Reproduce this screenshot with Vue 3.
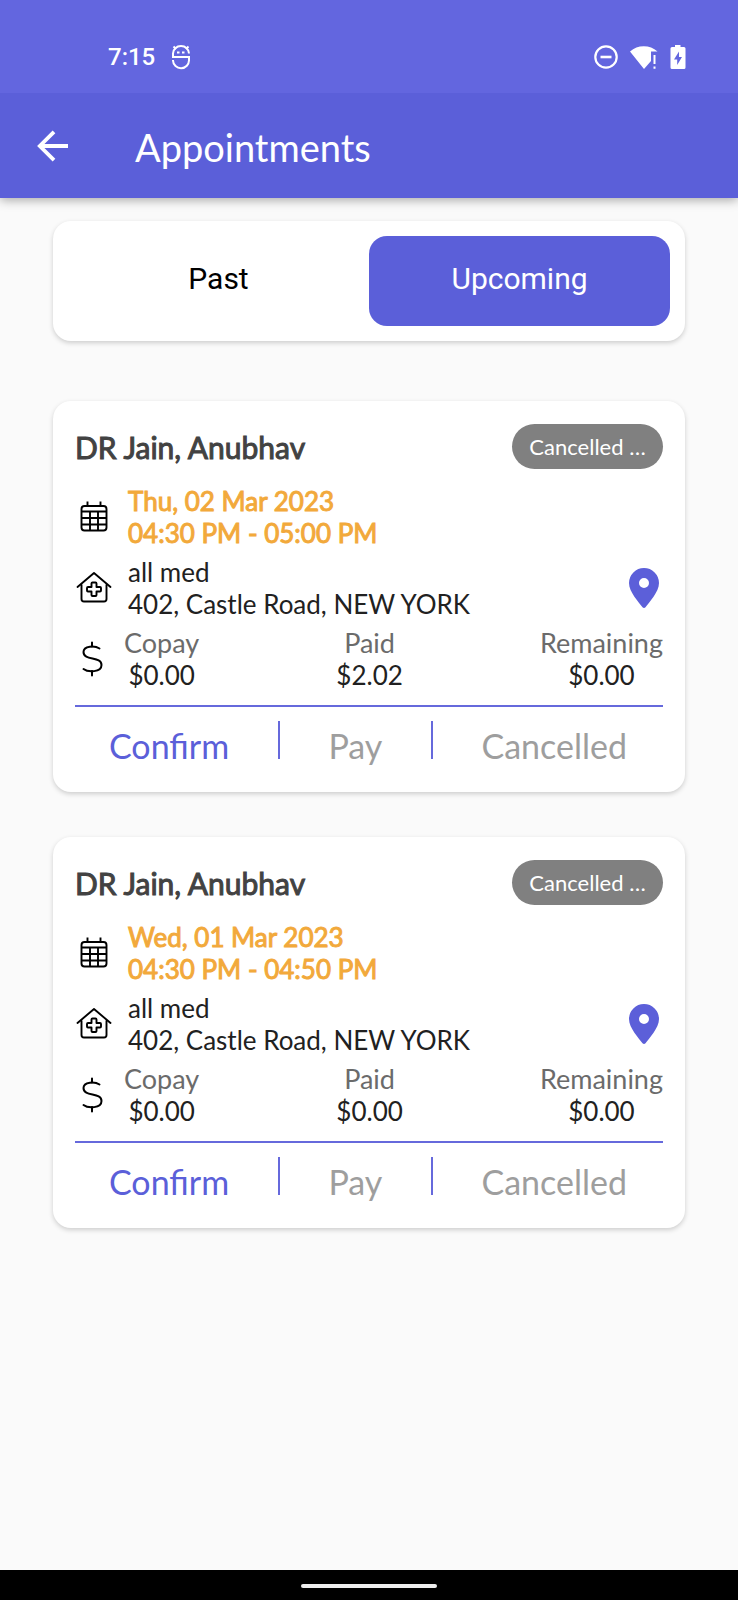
<script setup>
import { ref } from 'vue'

const tabs = ['Past', 'Upcoming']
const activeTab = ref('Upcoming')

const appointments = [
  {
    id: 1,
    doctor: 'DR Jain, Anubhav',
    status: 'Cancelled …',
    date: 'Thu, 02 Mar 2023',
    time: '04:30 PM - 05:00 PM',
    clinic: 'all med',
    address: '402, Castle Road, NEW YORK',
    amounts: [
      { label: 'Copay', value: '$0.00' },
      { label: 'Paid', value: '$2.02' },
      { label: 'Remaining', value: '$0.00' },
    ],
  },
  {
    id: 2,
    doctor: 'DR Jain, Anubhav',
    status: 'Cancelled …',
    date: 'Wed, 01 Mar 2023',
    time: '04:30 PM - 04:50 PM',
    clinic: 'all med',
    address: '402, Castle Road, NEW YORK',
    amounts: [
      { label: 'Copay', value: '$0.00' },
      { label: 'Paid', value: '$0.00' },
      { label: 'Remaining', value: '$0.00' },
    ],
  },
]
</script>

<template>
  <div class="screen">
    <div class="status-bar">
      <div class="status-group">
        <span class="clock">7:15</span>
        <svg class="bug" width="18" height="26" viewBox="0 0 18 26" fill="none" stroke="#fff" stroke-width="2">
          <path d="M17 9.500A8 7.500 0 0 0 1 9.500V13H17V16A8 8 0 0 1 1 16.500V16" />
          <path d="M4 5L1.500 2.500M14 5L16.500 2.500" />
          <path d="M5 8.500H7.500M10 8.500H12.500" />
        </svg>
      </div>
      <div class="status-group icons">
        <svg width="24" height="24" viewBox="0 0 24 24" fill="none" stroke="#fff" stroke-width="2.200">
          <circle cx="12" cy="12" r="10.700" />
          <path d="M6.500 12H17.500" stroke-width="2.600" />
        </svg>
        <svg width="28" height="24" viewBox="0 0 28 24" fill="#fff">
          <path d="M0 6.500A21 21 0 0 1 27.500 6.500H21V16L14 24Z" />
          <path d="M23.500 10H25.500V19H23.500ZM23.500 21.500H25.500V23.800H23.500Z" />
        </svg>
        <svg width="16" height="26" viewBox="0 0 16 26">
          <path fill="#fff" d="M5 1H10.500V3H14Q15.500 3 15.500 4.500V23.500Q15.500 25 14 25H2Q.5 25 .5 23.500V4.500Q.5 3 2 3H5Z" />
          <path fill="#6366df" d="M9 7.500L4 15.500H7.200V21L12 13H9Z" />
        </svg>
      </div>
    </div>

    <header class="app-bar">
      <button class="back" type="button" aria-label="Back">
        <svg width="32" height="32" viewBox="0 0 32 32" fill="none" stroke="#fff" stroke-width="3.800">
          <path d="M31 16H3M17 1.800L2.800 16L17 30.200" />
        </svg>
      </button>
      <h1>Appointments</h1>
    </header>

    <main>
      <div class="tabs" role="tablist">
        <button
          v-for="tab in tabs"
          :key="tab"
          type="button"
          role="tab"
          class="tab"
          :class="{ active: tab === activeTab }"
          :aria-selected="tab === activeTab"
          @click="activeTab = tab"
        >{{ tab }}</button>
      </div>

      <article v-for="item in appointments" :key="item.id" class="card">
        <div class="card-head">
          <h2>{{ item.doctor }}</h2>
          <span class="badge">{{ item.status }}</span>
        </div>

        <div class="row">
          <svg class="icon" width="38" height="38" viewBox="0 0 38 38" fill="none" stroke="#000" stroke-width="1.900">
            <rect x="6.500" y="8" width="25" height="24.500" rx="3" />
            <path d="M12.500 3.500V8M25.500 3.500V8" />
            <path d="M6.500 13.500H31.500M6.500 20H31.500M6.500 26.500H31.500M15 13.500V32.500M23 13.500V32.500" />
          </svg>
          <div class="text when">
            <div>{{ item.date }}</div>
            <div>{{ item.time }}</div>
          </div>
        </div>

        <div class="row">
          <svg class="icon" width="38" height="38" viewBox="0 0 38 38" fill="none" stroke="#000" stroke-width="1.900" stroke-linejoin="round" stroke-linecap="round">
            <path d="M2.500 18L19 4L35.500 18" />
            <path d="M6.500 16V30Q6.500 32.500 9 32.500H29Q31.500 32.500 31.500 30V16" />
            <path d="M17.500 13.500H20.500Q21.500 13.500 21.500 14.500V18H25Q26 18 26 19V21.500Q26 22.500 25 22.500H21.500V26Q21.500 27 20.500 27H17.500Q16.500 27 16.500 26V22.500H13Q12 22.500 12 21.500V19Q12 18 13 18H16.500V14.500Q16.500 13.500 17.500 13.500Z" />
          </svg>
          <div class="text">
            <div>{{ item.clinic }}</div>
            <div>{{ item.address }}</div>
          </div>
          <button class="pin" type="button" aria-label="Show on map">
            <svg width="30" height="40" viewBox="0 0 30 40">
              <path fill="#5c5fd9" fill-rule="evenodd" d="M15 0A15 15 0 0 1 30 15C30 24 20 34.500 16.500 39.200Q15 40.800 13.500 39.200C10 34.500 0 24 0 15A15 15 0 0 1 15 0ZM15 10A5 5 0 1 0 15 20A5 5 0 1 0 15 10Z" />
            </svg>
          </button>
        </div>

        <div class="row">
          <svg class="icon" width="38" height="38" viewBox="0 0 38 38" fill="none" stroke="#000" stroke-width="2" stroke-linecap="round">
            <path d="M17 2.500V6.500M17 31V35.500" />
            <path d="M24.500 8.500C20 5.500 8.500 5.500 8.500 12C8.500 21 26.500 16 26.500 25C26.500 32.500 13 32.500 8.500 29" />
          </svg>
          <dl class="amounts">
            <div v-for="amount in item.amounts" :key="amount.label">
              <dt>{{ amount.label }}</dt>
              <dd>{{ amount.value }}</dd>
            </div>
          </dl>
        </div>

        <div class="actions">
          <button type="button" class="confirm">Confirm</button>
          <span class="divider"></span>
          <button type="button" disabled>Pay</button>
          <span class="divider"></span>
          <button type="button" disabled>Cancelled</button>
        </div>
      </article>
    </main>

    <div class="nav-bar"><span class="handle"></span></div>
  </div>
</template>

<style>
body {
  margin: 0;
  background: #fafafa;
}
</style>

<style scoped>
.screen {
  min-height: 100vh;
  display: flex;
  flex-direction: column;
  background: #fafafa;
  color: #212121;
  font-family: Lato, sans-serif;
  font-size: 26px;
  line-height: 32px;
}

svg {
  display: block;
  flex: none;
}

button {
  margin: 0;
  padding: 0;
  border: 0;
  background: none;
  color: inherit;
  font: inherit;
  cursor: pointer;
}

button:disabled {
  cursor: default;
}

.status-bar {
  position: relative;
  z-index: 1;
  display: flex;
  justify-content: space-between;
  align-items: center;
  box-sizing: border-box;
  height: 93px;
  padding: 20px 52px 0 108px;
  background: #6366df;
}

.status-group {
  display: flex;
  align-items: center;
  gap: 17px;
}

.icons {
  gap: 12px;
}

.clock {
  color: #fff;
  font: 500 24px/32px Roboto, sans-serif;
}

.app-bar {
  display: flex;
  align-items: center;
  gap: 66px;
  height: 105px;
  padding: 0 37px;
  background: #5b5fd9;
  color: #fff;
  box-shadow: 0 2px 10px rgba(0, 0, 0, 0.34);
}

h1 {
  margin: 2px 0 0;
  font-size: 38px;
  font-weight: 400;
  line-height: 44px;
}

main {
  flex: 1;
  padding: 23px 53px 46px;
}

.tabs,
.card {
  border-radius: 18px;
  background: #fff;
  box-shadow: 0 2px 5px rgba(0, 0, 0, 0.18);
}

.tabs {
  display: flex;
  padding: 15px;
  margin-bottom: 60px;
}

.tab {
  flex: 1;
  height: 90px;
  padding-bottom: 4px;
  border-radius: 18px;
  color: #000;
  font: 400 30px/36px Roboto, sans-serif;
}

.tab.active {
  background: #5b5fd9;
  color: #fff;
}

.card {
  padding: 23px 22px 26px;
}

.card + .card {
  margin-top: 45px;
}

.card-head {
  display: flex;
  justify-content: space-between;
  align-items: center;
  margin-bottom: 16px;
}

h2 {
  margin: 0;
  color: #424242;
  font-size: 30px;
  font-weight: 400;
  line-height: 36px;
  -webkit-text-stroke: 1px currentColor;
}

.badge {
  box-sizing: border-box;
  width: 151px;
  height: 45px;
  border-radius: 23px;
  background: #808080;
  color: #fff;
  font-size: 22px;
  line-height: 46px;
  text-align: center;
}

.row {
  display: flex;
  align-items: center;
}

.row + .row {
  margin-top: 7px;
}

.text {
  flex: 1;
  margin-left: 15px;
}

.when {
  color: #f2a93b;
  -webkit-text-stroke: 1px currentColor;
}

.pin {
  padding: 0 4px;
}

.amounts {
  flex: 1;
  display: flex;
  justify-content: space-between;
  margin: 0 0 0 11px;
  text-align: center;
}

dt {
  color: #6b6b6b;
  font-size: 27px;
}

dd {
  margin: 0;
}

.actions {
  display: flex;
  justify-content: space-between;
  align-items: flex-start;
  margin-top: 14px;
  padding: 14px 36px 0 34px;
  border-top: 2px solid #6669dc;
  color: #9e9e9e;
  font-size: 34px;
  line-height: 40px;
}

.actions button {
  padding-top: 5px;
}

.confirm {
  color: #5b5fd9;
}

.divider {
  width: 2px;
  height: 38px;
  background: #6669dc;
}

.nav-bar {
  display: flex;
  justify-content: center;
  align-items: center;
  height: 30px;
  background: #000;
}

.handle {
  width: 136px;
  height: 4px;
  margin-top: 2px;
  border-radius: 2px;
  background: #eee;
}
</style>
